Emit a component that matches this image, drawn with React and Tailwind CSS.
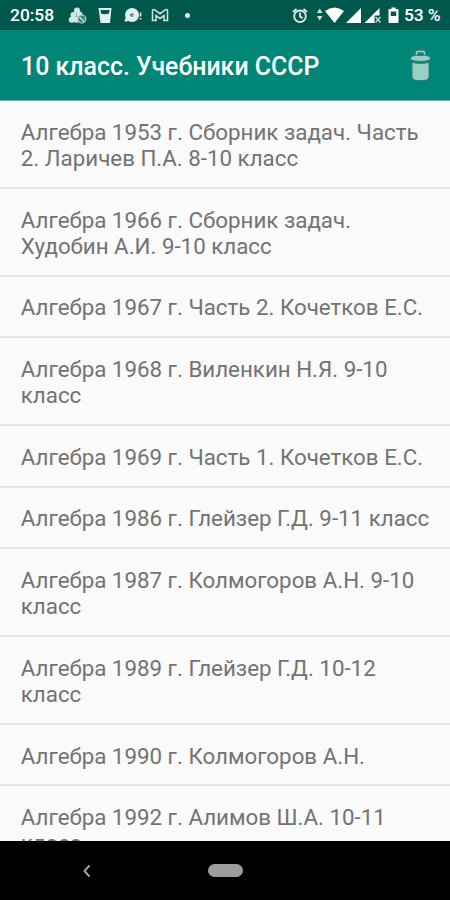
import React from 'react';

const books = [
  ['Алгебра 1953 г. Сборник задач. Часть', '2. Ларичев П.А. 8-10 класс'],
  ['Алгебра 1966 г. Сборник задач.', 'Худобин А.И. 9-10 класс'],
  ['Алгебра 1967 г. Часть 2. Кочетков Е.С.'],
  ['Алгебра 1968 г. Виленкин Н.Я. 9-10', 'класс'],
  ['Алгебра 1969 г. Часть 1. Кочетков Е.С.'],
  ['Алгебра 1986 г. Глейзер Г.Д. 9-11 класс'],
  ['Алгебра 1987 г. Колмогоров А.Н. 9-10', 'класс'],
  ['Алгебра 1989 г. Глейзер Г.Д. 10-12', 'класс'],
  ['Алгебра 1990 г. Колмогоров А.Н.'],
  ['Алгебра 1992 г. Алимов Ш.А. 10-11', 'класс'],
];

function NotificationIcons() {
  return (
    <svg className="shrink-0" width="128" height="24" viewBox="66 4 128 24" fill="#e3f0ed">
      {/* berries */}
      <g fill="#d3e6e2">
        <circle cx="77" cy="10.500" r="3" />
        <circle cx="73.500" cy="15" r="3" />
        <circle cx="79.500" cy="14.500" r="3" />
        <circle cx="71.800" cy="19.800" r="3" />
        <circle cx="76.500" cy="19.800" r="3" />
      </g>
      <circle cx="81.800" cy="19" r="4" fill="#3f8176" stroke="#b9d6d0" strokeWidth="1.200" />
      <path d="M79.500 17l4.500 4.500" stroke="#d3e6e2" strokeWidth="1.200" />
      {/* glass */}
      <path fillRule="evenodd" d="M98.500 8h13L110 23h-9.500zM100.500 10l.4 3.500q4 1.500 8.200 0l.4-3.500z" />
      {/* disc */}
      <circle cx="132" cy="15" r="7" />
      <path d="M126 18l-1.800 2.300 2 1.700 3-2zM139.800 12.500h1.500v4h-1.500zM139.800 18h1.500v1.500h-1.500z" />
      <circle cx="132" cy="15" r="1.700" fill="#00574b" />
      <path d="M132 13.500v2h1.500" stroke="#e3f0ed" strokeWidth=".8" fill="none" />
      {/* mail */}
      <path d="M152.500 20.500V11q0-2 2-1.300l5.500 4 5.500-4q2-.7 2 1.300v9.500h-3.500V15.500l-4 3-4-3v5z" fill="none" stroke="#cfe2de" strokeWidth="1.600" />
      <circle cx="187.500" cy="15.500" r="2.500" />
    </svg>
  );
}

function SystemIcons() {
  return (
    <svg width="110" height="24" viewBox="290 4 110 24" fill="#fff">
      {/* alarm */}
      <g fill="none" stroke="#dcebe8" strokeWidth="1.800">
        <circle cx="300" cy="16.300" r="5.800" />
        <path d="M300 12.500v4l2.800 1.800M293 12l3.500-3M307 12l-3.500-3" />
      </g>
      <path d="M319.700 8.500l2.800 4.500h-5.600zM319.700 20.500l2.800-4.500h-5.600z" fill="#cfe2de" />
      <path d="M325 11q9.500-7 19 0l-9.500 12z" />
      <path d="M346 23l15-15v15z" />
      <path d="M364.500 23l15-15v7.500h-5V23z" />
      <path d="M375.500 17l5 5.500M380.500 17l-5 5.500" stroke="#cfe2de" strokeWidth="1.300" />
      <path fillRule="evenodd" d="M391.500 7.500h4V9h2q1 0 1 1v12q0 1-1 1h-8q-1 0-1-1V10q0-1 1-1h2zM390.800 11.500V16h5.400v-4.500z" />
    </svg>
  );
}

function TrashIcon() {
  return (
    <svg width="24" height="34" viewBox="409 47 24 34" stroke="#3d7c73" strokeWidth="1">
      <path d="M416.500 55v-3.500q0-1.500 1.500-1.500h5q1.500 0 1.500 1.500V55" fill="none" strokeWidth="3" />
      <path d="M416.500 55v-3.200q0-1.300 1.300-1.300h5.400q1.300 0 1.300 1.300V55" fill="none" stroke="#99cfc6" strokeWidth="1.300" />
      <path d="M410.500 58.500q0-4 5-4h10q5 0 5 4-4 2-10 2t-10-2z" fill="#99cfc6" />
      <path d="M412 61.500q8.500 2 17 0V75q0 4-5 4.500h-7q-5-.5-5-4.500z" fill="#99cfc6" />
    </svg>
  );
}

function App() {
  return (
    <div className="w-[450px] h-[900px] flex flex-col overflow-hidden bg-[#fafafa] font-[Roboto,sans-serif]">
      <div className="h-[30px] shrink-0 bg-[#00574b] flex items-center text-white text-[17.4px] leading-none font-medium whitespace-nowrap pt-[2px]">
        <span className="w-[66px] pl-[10px] shrink-0">20:58</span>
        <NotificationIcons />
        <div className="ml-[96px] shrink-0"><SystemIcons /></div>
        <span className="ml-[4px] tracking-[-0.1px]">53 %</span>
      </div>

      <header className="h-[70px] shrink-0 bg-[#008577] flex items-center justify-between pl-[21px] pr-[17px]">
        <h1 className="text-white text-[24.9px] font-medium whitespace-nowrap pt-[4px]">10 класс. Учебники СССР</h1>
        <TrashIcon />
      </header>

      <ul className="flex-1 min-h-0 overflow-hidden border-t border-[#6fb5ac]">
        {books.map((lines, i) => (
          <li
            key={i}
            className="pl-[20.8px] pt-[17.7px] pb-[15.4px] border-b-2 border-[#e2e2e2] text-[22.33px] leading-[26.4px] text-[#737373] whitespace-nowrap"
          >
            {lines.map((line) => (
              <p key={line}>{line}</p>
            ))}
          </li>
        ))}
      </ul>

      <nav className="h-[59px] shrink-0 bg-black flex items-center">
        <svg className="ml-[82px]" width="10" height="14" viewBox="0 0 10 14" fill="none" stroke="#a0a0a0" strokeWidth="2">
          <path d="M7.500 1.500L2.500 7l5 5.500" />
        </svg>
        <div className="ml-[116px] w-[35px] h-[13px] rounded-full bg-[#9d9d9d]" />
      </nav>
    </div>
  );
}

export default App;
